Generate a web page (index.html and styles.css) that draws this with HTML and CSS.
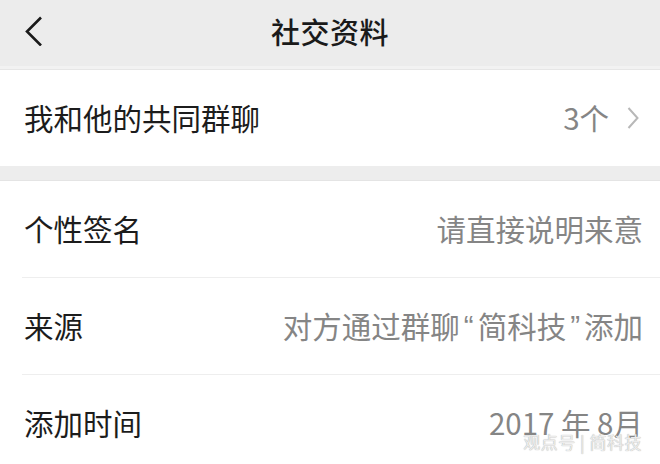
FILE: index.html
```html
<!DOCTYPE html>
<html lang="zh-CN">
<head>
<meta charset="UTF-8">
<meta name="viewport" content="width=device-width, initial-scale=1.0">
<title>社交资料</title>
<link rel="stylesheet" href="styles.css">
</head>
<body>
  <div class="page">
    <div class="navbar">
      <svg class="back" width="20" height="30" viewBox="0 0 20 30">
        <polyline points="17,1.5 3,15.5 17,29.5" fill="none" stroke="#1a1a1a" stroke-width="2.6"/>
      </svg>
      <h1 class="title">社交资料</h1>
    </div>

    <div class="group first">
      <div class="row">
        <span class="label">我和他的共同群聊</span>
        <span class="value">3个
          <svg class="arrow" width="12" height="22" viewBox="0 0 12 22">
            <polyline points="1.5,1 10.5,11 1.5,21" fill="none" stroke="#b8b8b8" stroke-width="2"/>
          </svg>
        </span>
      </div>
    </div>

    <div class="group">
      <div class="row">
        <span class="label">个性签名</span>
        <span class="value">请直接说明来意</span>
      </div>
      <div class="row">
        <span class="label">来源</span>
        <span class="value">对方通过群聊<span class="quote">“</span>简科技<span class="quote">”</span>添加</span>
      </div>
      <div class="row">
        <span class="label">添加时间</span>
        <span class="value">2017 年 8月</span>
      </div>
    </div>

    <div class="watermark">观点号 | 简科技</div>
  </div>
</body>
</html>
```

FILE: styles.css
```css
body {
  margin: 0;
  padding: 0;
  background: #ededed;
  font-family: "Noto Sans CJK SC", "Noto Sans", sans-serif;
  overflow: hidden;
}

.page {
  position: relative;
  width: 660px;
  height: 464px;
  overflow: hidden;
}

.navbar {
  height: 66px;
  display: flex;
  align-items: center;
  justify-content: center;
  position: relative;
  background: #ececec;
  border-bottom: 3px solid #f2f2f2;
  box-shadow: 0 1px 0 #e6e6e6;
}

.back {
  position: absolute;
  left: 24px;
  top: 16px;
}

.title {
  margin: 0 0 5px;
  font-size: 29px;
  font-weight: 500;
  color: #1a1a1a;
  letter-spacing: 0.5px;
}

.group {
  background: #fff;
  margin-top: 14px;
  border-top: 1px solid #e4e4e4;
}

.group.first {
  margin-top: 1px;
  border-top: none;
}

.row {
  height: 96px;
  margin-left: 22px;
  padding-right: 17px;
  display: flex;
  align-items: center;
  justify-content: space-between;
  border-bottom: 1px solid #eeeeee;
  padding-left: 2px;
}

.row:last-child {
  border-bottom: none;
}

.label {
  font-size: 29.5px;
  color: #1c1c1c;
  line-height: 1;
}

.value {
  font-size: 29.5px;
  color: #858585;
  line-height: 1;
  display: flex;
  align-items: center;
}

.quote {
  font-family: "Liberation Sans", sans-serif;
  padding: 0 4px;
}

.arrow {
  margin-left: 18px;
  margin-right: 4px;
}

.watermark {
  position: absolute;
  right: 18px;
  bottom: 10px;
  font-size: 17px;
  color: #ececec;
  text-shadow: 0 0 1px #9a9a9a;
  letter-spacing: 0.5px;
}
```
